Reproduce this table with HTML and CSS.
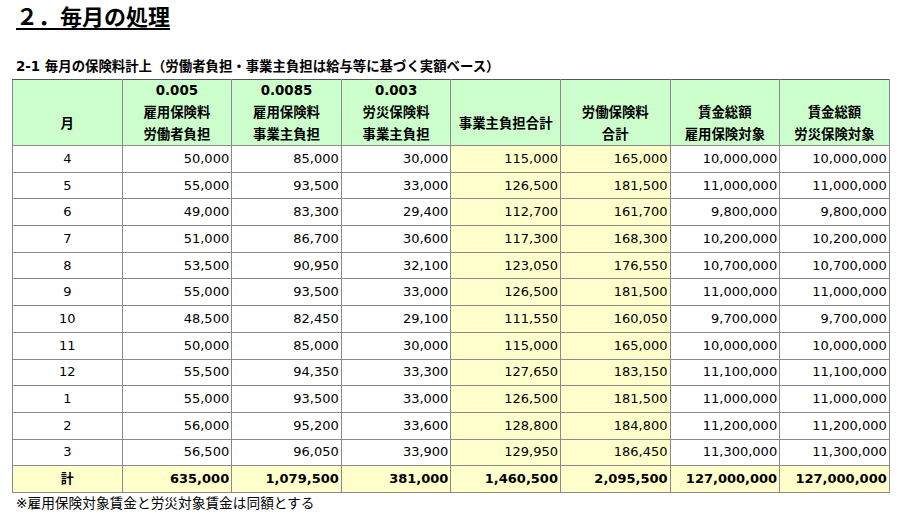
FILE: index.html
```html
<!DOCTYPE html>
<html lang="ja">
<head>
<meta charset="utf-8">
<title>毎月の処理</title>
<link rel="stylesheet" href="styles.css">
</head>
<body>
<h1 class="title">２．毎月の処理</h1>
<h2 class="subtitle">2-1 毎月の保険料計上（労働者負担・事業主負担は給与等に基づく実額ベース）</h2>
<table class="grid">
  <colgroup>
    <col><col><col><col><col><col><col><col>
  </colgroup>
  <thead>
    <tr>
      <th><div class="rate"></div><div class="lbl">月</div></th>
      <th><div class="rate">0.005</div><div class="lbl">雇用保険料<br>労働者負担</div></th>
      <th><div class="rate">0.0085</div><div class="lbl">雇用保険料<br>事業主負担</div></th>
      <th><div class="rate">0.003</div><div class="lbl">労災保険料<br>事業主負担</div></th>
      <th><div class="rate"></div><div class="lbl">事業主負担合計</div></th>
      <th><div class="rate"></div><div class="lbl">労働保険料<br>合計</div></th>
      <th><div class="rate"></div><div class="lbl">賃金総額<br>雇用保険対象</div></th>
      <th><div class="rate"></div><div class="lbl">賃金総額<br>労災保険対象</div></th>
    </tr>
  </thead>
  <tbody>
    <tr><td class="m">4</td><td>50,000</td><td>85,000</td><td>30,000</td><td class="y">115,000</td><td class="y">165,000</td><td>10,000,000</td><td>10,000,000</td></tr>
    <tr><td class="m">5</td><td>55,000</td><td>93,500</td><td>33,000</td><td class="y">126,500</td><td class="y">181,500</td><td>11,000,000</td><td>11,000,000</td></tr>
    <tr><td class="m">6</td><td>49,000</td><td>83,300</td><td>29,400</td><td class="y">112,700</td><td class="y">161,700</td><td>9,800,000</td><td>9,800,000</td></tr>
    <tr><td class="m">7</td><td>51,000</td><td>86,700</td><td>30,600</td><td class="y">117,300</td><td class="y">168,300</td><td>10,200,000</td><td>10,200,000</td></tr>
    <tr><td class="m">8</td><td>53,500</td><td>90,950</td><td>32,100</td><td class="y">123,050</td><td class="y">176,550</td><td>10,700,000</td><td>10,700,000</td></tr>
    <tr><td class="m">9</td><td>55,000</td><td>93,500</td><td>33,000</td><td class="y">126,500</td><td class="y">181,500</td><td>11,000,000</td><td>11,000,000</td></tr>
    <tr><td class="m">10</td><td>48,500</td><td>82,450</td><td>29,100</td><td class="y">111,550</td><td class="y">160,050</td><td>9,700,000</td><td>9,700,000</td></tr>
    <tr><td class="m">11</td><td>50,000</td><td>85,000</td><td>30,000</td><td class="y">115,000</td><td class="y">165,000</td><td>10,000,000</td><td>10,000,000</td></tr>
    <tr><td class="m">12</td><td>55,500</td><td>94,350</td><td>33,300</td><td class="y">127,650</td><td class="y">183,150</td><td>11,100,000</td><td>11,100,000</td></tr>
    <tr><td class="m">1</td><td>55,000</td><td>93,500</td><td>33,000</td><td class="y">126,500</td><td class="y">181,500</td><td>11,000,000</td><td>11,000,000</td></tr>
    <tr><td class="m">2</td><td>56,000</td><td>95,200</td><td>33,600</td><td class="y">128,800</td><td class="y">184,800</td><td>11,200,000</td><td>11,200,000</td></tr>
    <tr><td class="m">3</td><td>56,500</td><td>96,050</td><td>33,900</td><td class="y">129,950</td><td class="y">186,450</td><td>11,300,000</td><td>11,300,000</td></tr>
  </tbody>
  <tfoot>
    <tr class="total"><td class="m">計</td><td>635,000</td><td>1,079,500</td><td>381,000</td><td>1,460,500</td><td>2,095,500</td><td>127,000,000</td><td>127,000,000</td></tr>
  </tfoot>
</table>
<p class="note">※雇用保険対象賃金と労災対象賃金は同額とする</p>
</body>
</html>
```

FILE: styles.css
```css
html, body {
  margin: 0;
  padding: 0;
  background: #ffffff;
}

body {
  font-family: "DejaVu Sans", "Noto Sans CJK JP", sans-serif;
  color: #000000;
}

.title {
  margin: 0;
  padding-left: 16px;
  font-size: 22px;
  line-height: 30px;
  font-weight: bold;
  text-decoration: underline;
  text-decoration-thickness: 2px;
  text-underline-offset: 3px;
  font-family: "Noto Sans CJK JP", sans-serif;
}

.subtitle {
  margin: 28px 0 3px 0;
  padding-left: 16px;
  font-size: 13.4px;
  line-height: 18px;
  font-weight: bold;
}

.grid {
  margin-left: 12px;
  width: 877px;
  table-layout: fixed;
  border-collapse: collapse;
  font-size: 13px;
  border: 1px solid #555555;
}

.grid col {
  width: 109.6px;
}

.grid th {
  background: #ccffcc;
  border: 1px solid #8a8a8a;
  border-top-color: #555555;
  padding: 0;
  font-weight: bold;
  height: 64px;
  vertical-align: top;
  font-size: 13.4px;
}

.rate {
  height: 22px;
  line-height: 22px;
  text-align: center;
}

.lbl {
  height: 43px;
  line-height: 22px;
  display: flex;
  align-items: center;
  justify-content: center;
  text-align: center;
}

.grid td {
  border: 1px solid #8a8a8a;
  height: 25.7px;
  padding: 0 2px 0 0;
  text-align: right;
  line-height: 18px;
  white-space: nowrap;
}

.grid td.m {
  text-align: center;
  padding: 0;
}

.grid td.y {
  background: #ffffcc;
}

.total td {
  background: #ffffcc;
  font-weight: bold;
}

.note {
  margin: 1px 0 0 0;
  padding-left: 16px;
  font-size: 13.7px;
  line-height: 18px;
}
```
